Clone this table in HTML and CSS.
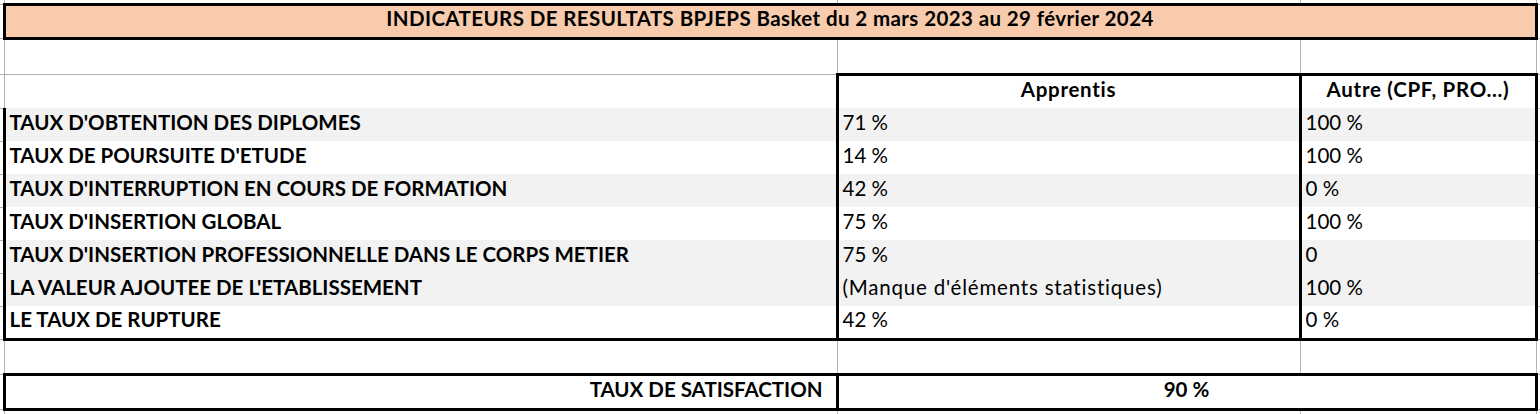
FILE: index.html
```html
<!DOCTYPE html>
<html lang="fr">
<head>
<meta charset="utf-8">
<title>Indicateurs de résultats BPJEPS Basket</title>
<link rel="stylesheet" href="styles.css">
</head>
<body>
<table class="sheet">
  <colgroup>
    <col class="col-stub">
    <col class="col-a">
    <col class="col-b">
    <col class="col-c">
    <col class="col-stub">
  </colgroup>
  <tr class="row-edge">
    <td class="stub"></td><td></td><td></td><td></td><td class="stub"></td>
  </tr>
  <tr class="row-title">
    <td class="stub"></td>
    <td colspan="3" class="title">INDICATEURS DE RESULTATS BPJEPS Basket du 2 mars 2023 au 29 février 2024</td>
    <td class="stub"></td>
  </tr>
  <tr class="row-gap">
    <td class="stub"></td><td class="gap-a"></td><td></td><td></td><td class="stub"></td>
  </tr>
  <tr class="row-head">
    <td class="stub"></td>
    <td class="head-a"></td>
    <td class="head head-b">Apprentis</td>
    <td class="head head-c">Autre (CPF, PRO…)</td>
    <td class="stub"></td>
  </tr>
  <tr class="row-data shade">
    <td class="stub"></td>
    <td class="label">TAUX D'OBTENTION DES DIPLOMES</td>
    <td class="val val-b">71 %</td>
    <td class="val val-c">100 %</td>
    <td class="stub"></td>
  </tr>
  <tr class="row-data">
    <td class="stub"></td>
    <td class="label">TAUX DE POURSUITE D'ETUDE</td>
    <td class="val val-b">14 %</td>
    <td class="val val-c">100 %</td>
    <td class="stub"></td>
  </tr>
  <tr class="row-data shade">
    <td class="stub"></td>
    <td class="label">TAUX D'INTERRUPTION EN COURS DE FORMATION</td>
    <td class="val val-b">42 %</td>
    <td class="val val-c">0 %</td>
    <td class="stub"></td>
  </tr>
  <tr class="row-data">
    <td class="stub"></td>
    <td class="label">TAUX D'INSERTION GLOBAL</td>
    <td class="val val-b">75 %</td>
    <td class="val val-c">100 %</td>
    <td class="stub"></td>
  </tr>
  <tr class="row-data shade">
    <td class="stub"></td>
    <td class="label">TAUX D'INSERTION PROFESSIONNELLE DANS LE CORPS METIER</td>
    <td class="val val-b">75 %</td>
    <td class="val val-c">0</td>
    <td class="stub"></td>
  </tr>
  <tr class="row-data shade">
    <td class="stub"></td>
    <td class="label">LA VALEUR AJOUTEE DE L'ETABLISSEMENT</td>
    <td class="val val-b val-note">(Manque d'éléments statistiques)</td>
    <td class="val val-c">100 %</td>
    <td class="stub"></td>
  </tr>
  <tr class="row-data row-last">
    <td class="stub"></td>
    <td class="label">LE TAUX DE RUPTURE</td>
    <td class="val val-b">42 %</td>
    <td class="val val-c">0 %</td>
    <td class="stub"></td>
  </tr>
  <tr class="row-gap2">
    <td class="stub"></td><td></td><td></td><td></td><td class="stub"></td>
  </tr>
  <tr class="row-sat">
    <td class="stub"></td>
    <td class="sat-label">TAUX DE SATISFACTION</td>
    <td colspan="2" class="sat-val">90 %</td>
    <td class="stub"></td>
  </tr>
  <tr class="row-edge-bottom">
    <td class="stub"></td><td></td><td></td><td></td><td class="stub"></td>
  </tr>
</table>
</body>
</html>
```
FILE: styles.css
```css
html, body {
  margin: 0;
  padding: 0;
  background: #ffffff;
}

body {
  font-family: Lato, "Open Sans", Arial, sans-serif;
  font-size: 20.5px;
  color: #000000;
}

.sheet {
  border-collapse: collapse;
  table-layout: fixed;
  width: 1540px;
}

.col-stub { width: 4px; }
.col-a { width: 833px; }
.col-b { width: 463px; }
.col-c { width: 236px; }

.sheet td {
  padding: 0 4px 9px 4px;
  border-left: 1px solid #b2b2b2;
  border-right: 1px solid #b2b2b2;
  border-top: none;
  border-bottom: none;
  vertical-align: bottom;
  line-height: 20px;
  white-space: nowrap;
  overflow: visible;
}

.sheet td.stub {
  padding: 0;
  border-bottom: 1px solid #b2b2b2;
}

.sheet td.stub:first-child { border-left: none; }
.sheet td.stub:last-child { border-right: none; }

.row-edge { height: 4px; }
.row-edge td { padding: 0; }
.row-title { height: 34px; }
.row-gap { height: 36px; }
.row-head { height: 34px; }
.row-data { height: 33px; }
.row-gap2 { height: 35px; }
.row-sat { height: 35px; }
.row-edge-bottom { height: 5px; }
.row-edge-bottom td { padding: 0; }

.sheet td.title {
  background: #f8cbad;
  border: 3px solid #000000;
  text-align: center;
  font-weight: 700;
  letter-spacing: 0.4px;
}

.sheet td.gap-a {
  border-bottom: 1px solid #b2b2b2;
}

.sheet td.head {
  font-weight: 700;
  text-align: center;
  letter-spacing: 0.7px;
  border-top: 3px solid #000000;
  border-left: 3px solid #000000;
  border-right: 3px solid #000000;
}

.shade td:not(.stub) {
  background: #f2f2f2;
}

.sheet td.label {
  font-weight: 700;
  border-left: 3px solid #000000;
  border-right: 3px solid #000000;
}

.sheet td.val-b {
  border-left: 3px solid #000000;
  border-right: 3px solid #000000;
}

.sheet td.val-c {
  border-left: 3px solid #000000;
  border-right: 3px solid #000000;
}

.sheet td.val-note {
  letter-spacing: 0.8px;
}

.row-last td:not(.stub) {
  border-bottom: 3px solid #000000;
}

.sheet td.sat-label {
  font-weight: 700;
  text-align: right;
  padding-right: 13px;
  border: 3px solid #000000;
}

.sheet td.sat-val {
  font-weight: 700;
  text-align: center;
  border: 3px solid #000000;
}
```
